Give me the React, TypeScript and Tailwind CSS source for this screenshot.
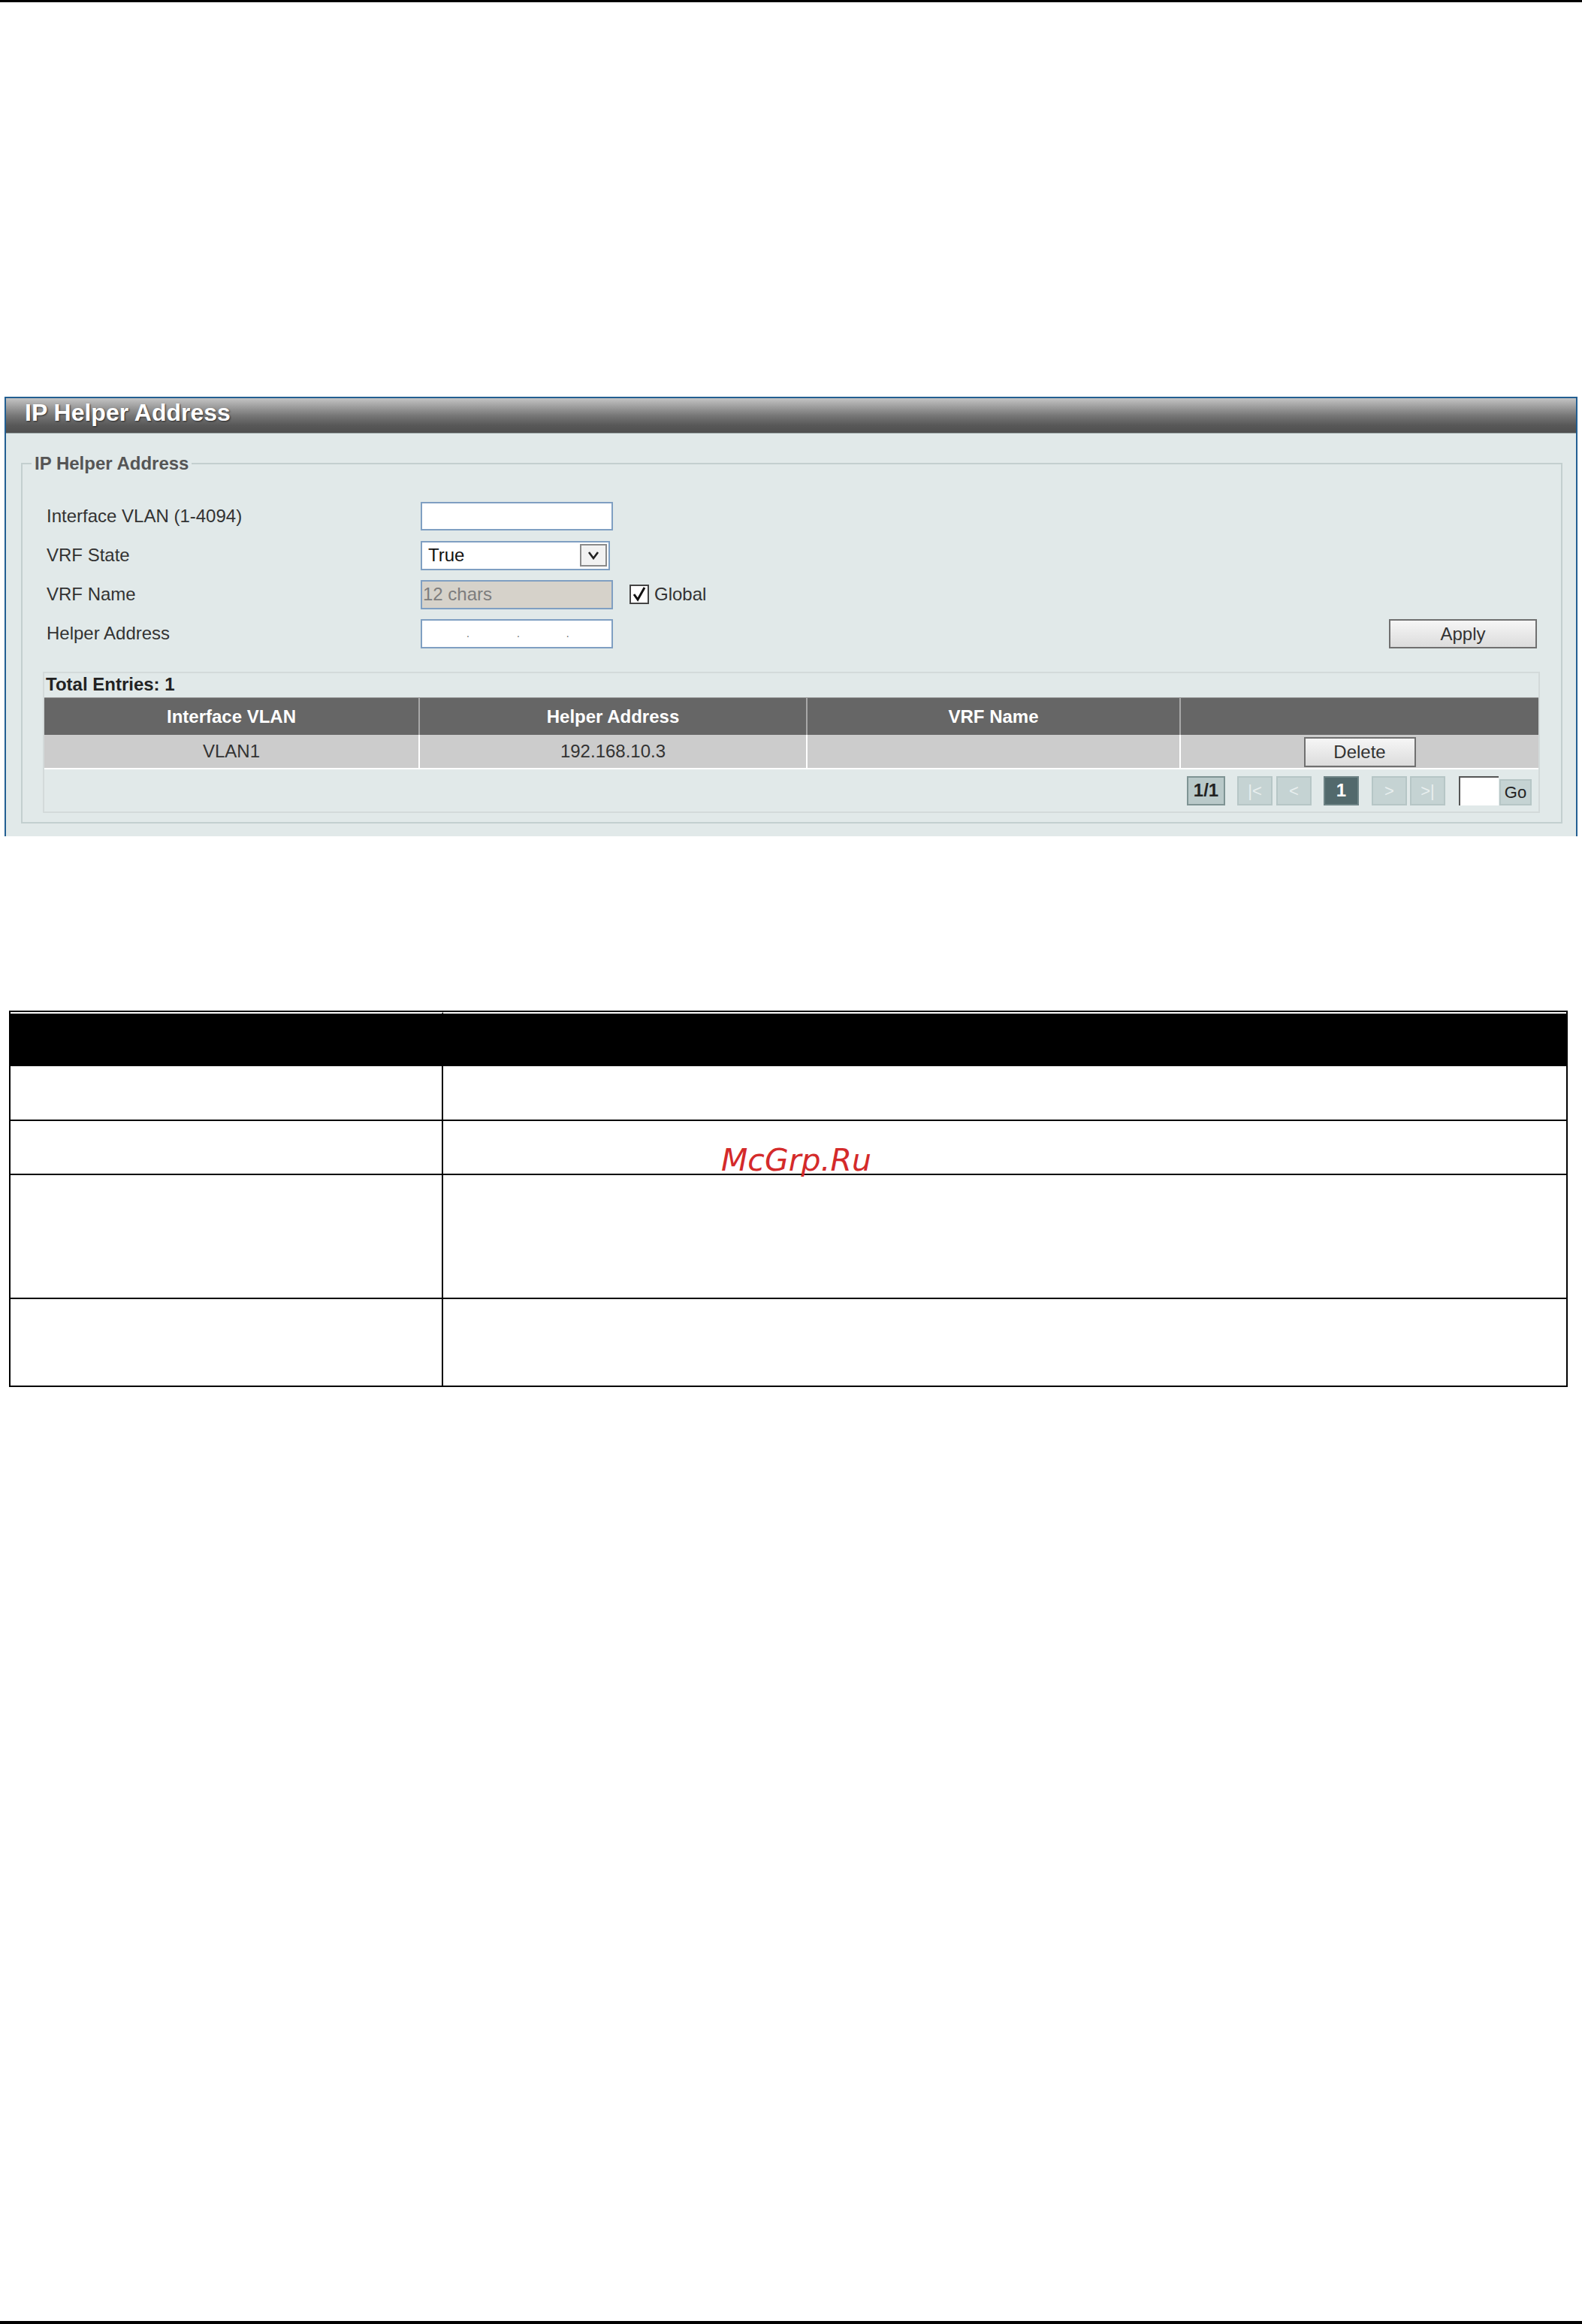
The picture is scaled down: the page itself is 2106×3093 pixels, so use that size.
import React from "react";

const F = "font-['Liberation_Sans',Arial,sans-serif]";

function PageBtn({ label, active, dim }: { label: string; active?: boolean; dim?: boolean }) {
  if (active) {
    return (
      <div className="w-[47px] h-[39px] flex items-center justify-center bg-[#52696c] border-2 border-[#6e8486] text-white font-bold text-[24px]">
        {label}
      </div>
    );
  }
  return (
    <div
      className={`w-[47px] h-[39px] flex items-center justify-center bg-[#c5d3d3] border-2 border-[#b6c6c6] text-[22px] ${
        dim ? "text-[#e9efef]" : "text-[#222]"
      }`}
    >
      {label}
    </div>
  );
}

export default function App() {
  return (
    <div className={`relative w-[2106px] h-[3093px] bg-white flex flex-col ${F}`}>
      <div className="h-[3px] bg-black shrink-0" />
      <div className="h-[525px] shrink-0" />

      {/* Panel */}
      <div className="ml-[6px] w-[2094px] h-[585px] shrink-0 border-x-2 border-t-2 border-[#235f92] bg-[#e1e9e9] flex flex-col">
        <div className="h-[47px] shrink-0 pl-[25px] pt-[3px] bg-[linear-gradient(to_bottom,#c4c4c4_0%,#a2a2a2_22%,#777777_50%,#585858_78%,#4f4f4f_100%)] border-b border-[#9aa6a6]">
          <span className="text-[32px] leading-[32px] font-bold text-white [text-shadow:1px_1px_2px_#2a2a2a]">
            IP Helper Address
          </span>
        </div>
        <div className="flex-1 pt-[26px] pl-[20px] pr-[18px]">
          <fieldset className="border-2 border-[#c3cfcf] pl-[27px] pr-[28px] pt-[30px] pb-[12px] m-0 min-w-0">
            <legend className="ml-[-15px] px-[4px] text-[24px] leading-[28px] font-bold text-[#555]">
              IP Helper Address
            </legend>

            {/* Row 1 */}
            <div className="h-[52px] flex items-center text-[24px] text-[#333]">
              <div className="w-[503px] pl-[5px]">Interface VLAN (1-4094)</div>
              <div className="w-[256px] h-[38px] bg-white border-2 border-[#7f9fc2]" />
            </div>
            {/* Row 2 */}
            <div className="h-[52px] flex items-center text-[24px] text-[#333]">
              <div className="w-[503px] pl-[5px]">VRF State</div>
              <div className="w-[252px] h-[39px] bg-white border-2 border-[#7f9fc2] flex items-center justify-between pl-[8px] pr-[2px]">
                <span className="text-[#111]">True</span>
                <div className="w-[36px] h-[30px] bg-[#f2f2f2] border-2 border-[#8a8a8a] flex items-center justify-center">
                  <svg width="16" height="12" viewBox="0 0 16 12">
                    <polyline points="2,2 8,10 14,2" fill="none" stroke="#222" strokeWidth="2.6" />
                  </svg>
                </div>
              </div>
            </div>
            {/* Row 3 */}
            <div className="h-[52px] flex items-center text-[24px] text-[#333]">
              <div className="w-[503px] pl-[5px]">VRF Name</div>
              <div className="w-[256px] h-[39px] bg-[#d6d2ca] border-2 border-[#7f9fc2] flex items-center pl-[1px] text-[#7d7d7d]">
                12 chars
              </div>
              <div className="ml-[22px] w-[26px] h-[26px] bg-white border-2 border-[#444] flex items-center justify-center">
                <svg width="18" height="20" viewBox="0 0 18 20">
                  <polyline points="2,10 7,17 16,1" fill="none" stroke="#111" strokeWidth="3" />
                </svg>
              </div>
              <span className="ml-[7px]">Global</span>
            </div>
            {/* Row 4 */}
            <div className="h-[52px] flex items-center text-[24px] text-[#333]">
              <div className="w-[503px] pl-[5px]">Helper Address</div>
              <div className="relative w-[256px] h-[39px] bg-white border-2 border-[#7f9fc2] flex items-center text-[14px] text-[#666]">
                <span className="ml-[59px]">.</span>
                <span className="ml-[63px]">.</span>
                <span className="ml-[62px]">.</span>
              </div>
              <button className="ml-auto mr-[4px] w-[197px] h-[39px] border-2 border-[#707070] bg-[linear-gradient(to_bottom,#f6f6f6,#dcdcdc)] text-[24px] text-[#333]">
                Apply
              </button>
            </div>

            {/* Entries box */}
            <div className="mt-[25px] border-2 border-[#d3dada]">
              <div className="h-[32px] flex items-center pl-[2px] pb-[2px] text-[24px] font-bold text-[#222]">
                Total Entries: 1
              </div>
              <div className="grid grid-cols-[498px_516px_497px_1fr] h-[50px] bg-[#666666] text-white font-bold text-[24px] border-t border-[#9a9a9a]">
                <div className="flex items-center justify-center">Interface VLAN</div>
                <div className="flex items-center justify-center border-l-2 border-[#a8a8a8]">Helper Address</div>
                <div className="flex items-center justify-center border-l-2 border-[#a8a8a8]">VRF Name</div>
                <div className="border-l-2 border-[#a8a8a8]" />
              </div>
              <div className="grid grid-cols-[498px_516px_497px_1fr] h-[46px] bg-[#cccccc] text-[#333] text-[24px] border-b-2 border-white">
                <div className="flex items-center justify-center">VLAN1</div>
                <div className="flex items-center justify-center border-l-2 border-white">192.168.10.3</div>
                <div className="border-l-2 border-white" />
                <div className="flex items-center justify-center border-l-2 border-white">
                  <button className="mt-[2px] w-[149px] h-[40px] border-2 border-[#707070] bg-[linear-gradient(to_bottom,#f6f6f6,#dcdcdc)] text-[24px] text-[#333]">
                    Delete
                  </button>
                </div>
              </div>
              <div className="h-[56px] flex items-center justify-end pr-[9px]">
                <div className="w-[51px] h-[39px] flex items-center justify-center bg-[#b9c9c9] border-2 border-[#7f9494] font-bold text-[24px] text-[#222]">
                  1/1
                </div>
                <div className="ml-[16px] flex gap-[5px]">
                  <PageBtn label="|<" dim />
                  <PageBtn label="<" dim />
                </div>
                <div className="ml-[16px]">
                  <PageBtn label="1" active />
                </div>
                <div className="ml-[17px] flex gap-[4px]">
                  <PageBtn label=">" dim />
                  <PageBtn label=">|" dim />
                </div>
                <div className="ml-[18px] w-[53px] h-[39px] bg-white border-t-2 border-l-2 border-[#555]" />
                <div className="ml-[1px] mt-[4px] w-[43px] h-[35px] flex items-center justify-center bg-[#c5d3d3] border-2 border-[#b6c6c6] text-[22px] text-[#222]">
                  Go
                </div>
              </div>
            </div>
          </fieldset>
        </div>
      </div>

      <div className="h-[232px] shrink-0" />

      {/* Description table */}
      <div className="ml-[12px] w-[2075px] shrink-0 border-2 border-black">
        <div className="grid grid-cols-[576px_1fr]">
          <div className="h-[72px] bg-black border-t-2 border-white border-r-2 border-r-black" />
          <div className="h-[72px] bg-black border-t-2 border-white" />
        </div>
        <div className="grid grid-cols-[576px_1fr] h-[73px] border-b-2 border-black">
          <div className="border-r-2 border-black" />
          <div />
        </div>
        <div className="grid grid-cols-[576px_1fr] h-[72px] border-b-2 border-black">
          <div className="border-r-2 border-black" />
          <div />
        </div>
        <div className="grid grid-cols-[576px_1fr] h-[165px] border-b-2 border-black">
          <div className="border-r-2 border-black" />
          <div />
        </div>
        <div className="grid grid-cols-[576px_1fr] h-[115px]">
          <div className="border-r-2 border-black" />
          <div />
        </div>
      </div>

      <div className="flex-1" />
      <div className="h-[4px] bg-black shrink-0" />

      <div className="absolute left-[960px] top-[1524px] font-['DejaVu_Sans',sans-serif] italic text-[41px] leading-none text-[#d42a2a]">
        McGrp.Ru
      </div>
    </div>
  );
}
